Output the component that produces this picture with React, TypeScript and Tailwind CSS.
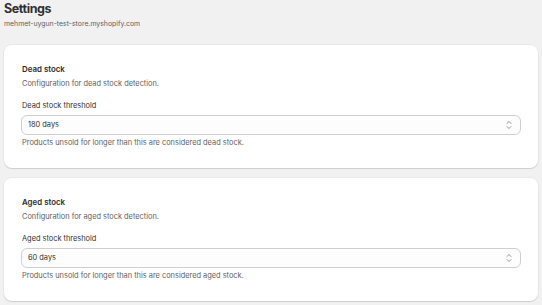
export default function App() {
  const sections = [
    {
      title: "Dead stock",
      desc: "Configuration for dead stock detection.",
      label: "Dead stock threshold",
      value: "180 days",
      help: "Products unsold for longer than this are considered dead stock.",
    },
    {
      title: "Aged stock",
      desc: "Configuration for aged stock detection.",
      label: "Aged stock threshold",
      value: "60 days",
      help: "Products unsold for longer than this are considered aged stock.",
    },
  ];

  return (
    <div
      className="min-h-screen w-full bg-[#f1f1f1] px-[4px] text-[#303030]"
      style={{ fontFamily: "Inter, 'Noto Sans', sans-serif" }}
    >
      <h1 className="text-[12.5px] leading-[17px] font-bold tracking-[-0.4px]">Settings</h1>
      <p className="mt-[1px] text-[6.9px] leading-[12px] text-[#616161]">
        mehmet-uygun-test-store.myshopify.com
      </p>

      <div className="mt-[15px] flex flex-col gap-[10px]">
        {sections.map((s) => (
          <div
            key={s.title}
            className="rounded-[8px] bg-white px-[18px] pt-[18px] pb-[19px] shadow-[0_1px_1px_rgba(0,0,0,0.12),0_0_0_1px_rgba(0,0,0,0.03)]"
          >
            <h2 className="text-[7.9px] leading-[12px] font-semibold text-[#2a2a2a]">{s.title}</h2>
            <p className="mt-[3px] text-[7.4px] leading-[12px] text-[#616161]">{s.desc}</p>
            <label className="mt-[10px] block text-[7.4px] leading-[12px] text-[#303030]">
              {s.label}
            </label>
            <div className="mt-[3px] -mx-[1px] flex h-[20px] items-center justify-between rounded-[6px] border border-[#cfcfcf] bg-[#fdfdfd] pl-[6px] pr-[7px]">
              <span className="text-[7.4px] leading-[12px]">{s.value}</span>
              <svg width="8" height="10" viewBox="0 0 8 10" fill="none" stroke="#8a8a8a" strokeWidth="0.9" strokeLinecap="round" strokeLinejoin="round">
                <path d="M2 3.5 L4 1.5 L6 3.5" />
                <path d="M2 6.5 L4 8.5 L6 6.5" />
              </svg>
            </div>
            <p className="mt-[2px] text-[7.4px] leading-[12px] text-[#616161]">{s.help}</p>
          </div>
        ))}
      </div>
    </div>
  );
}
